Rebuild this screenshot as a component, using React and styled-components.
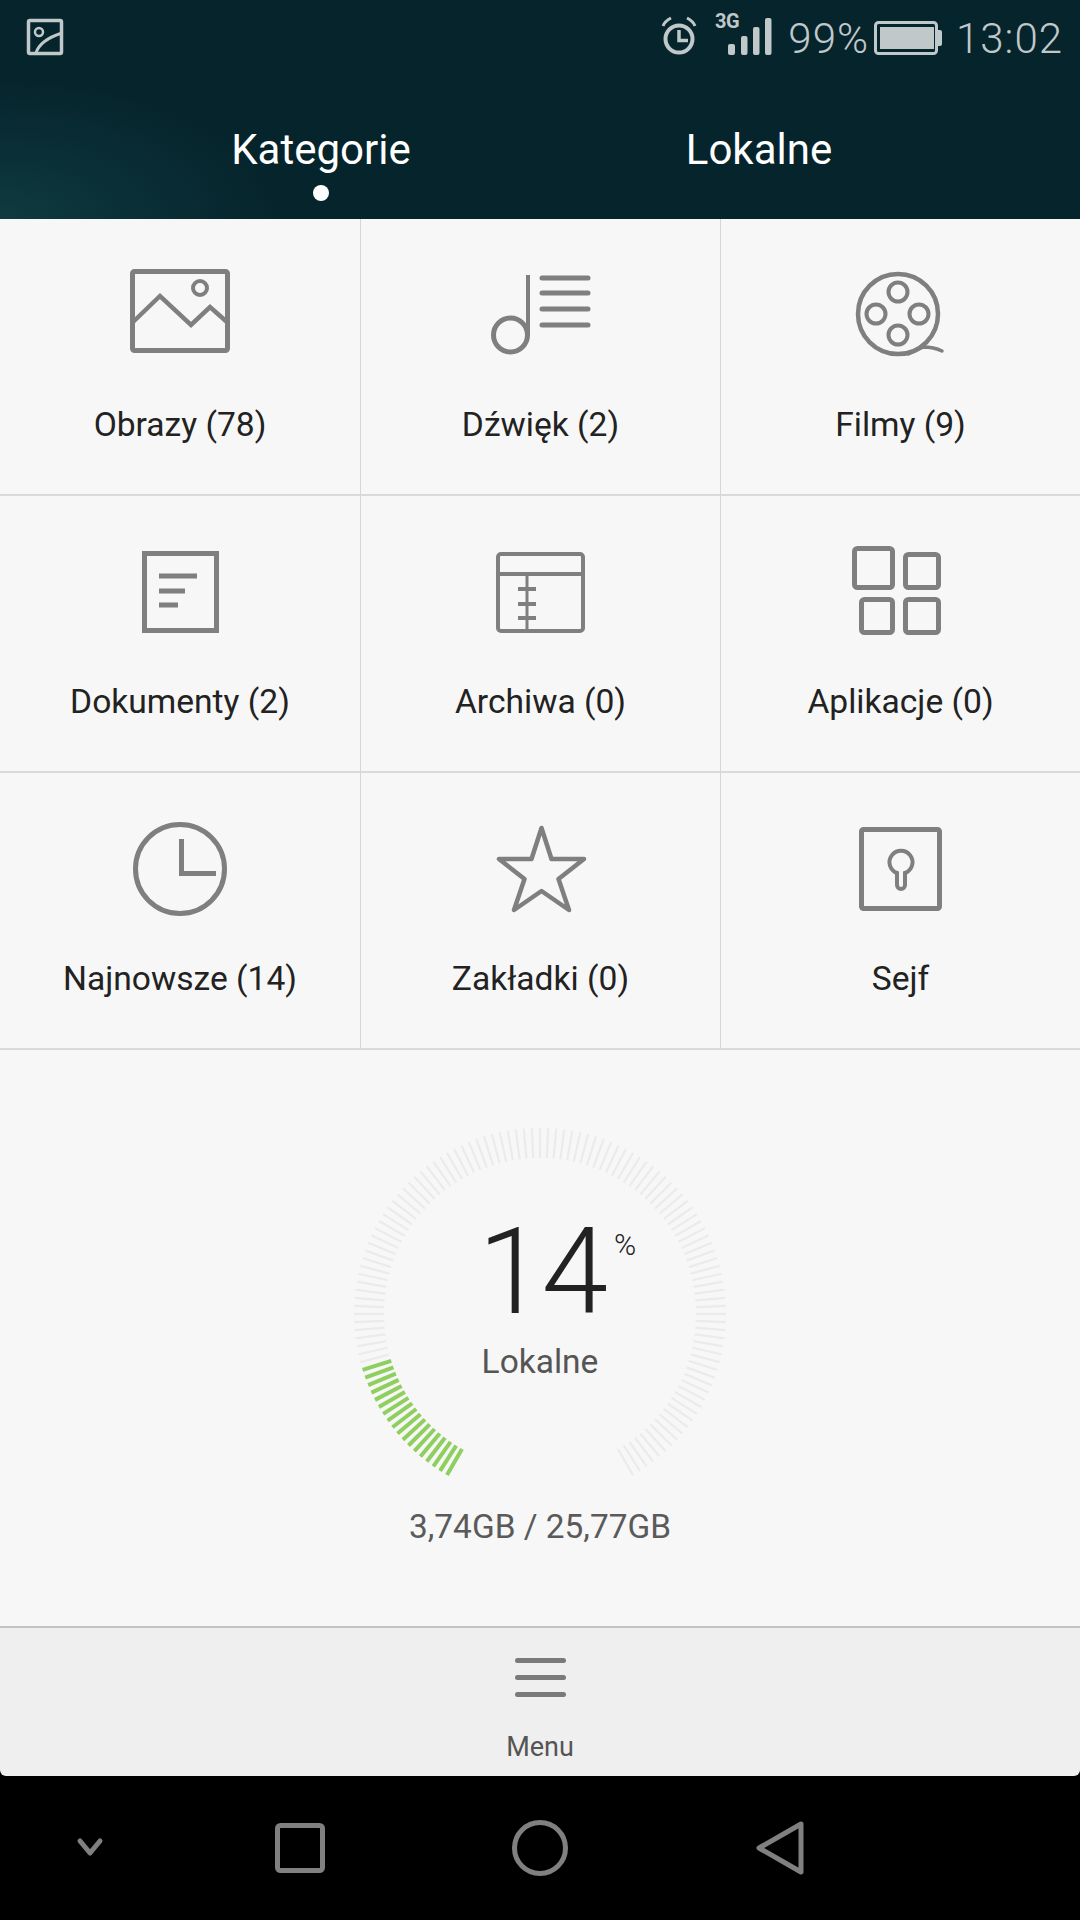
import React from 'react';
import styled, { createGlobalStyle } from 'styled-components';

const Global = createGlobalStyle`
html, body {
  margin: 0;
  padding: 0;
  background: #000;
}
* { box-sizing: border-box; }
`;

const Screen = styled.div`
width: 1080px;
height: 1920px;
display: flex;
flex-direction: column;
overflow: hidden;
background: #000;
font-family: Roboto, "Liberation Sans", sans-serif;
`;

const Header = styled.header`
height: 219px;
flex: none;
background:
  radial-gradient(ellipse 280px 140px at 0% 100%, #0e3a40 0%, rgba(14, 58, 64, 0) 100%),
  #06242c;
`;

const StatusBar = styled.div`
height: 70px;
display: flex;
justify-content: space-between;
align-items: flex-start;
padding: 14px 17px 0 26px;
color: #c0c8ca;
`;

const StatusGroup = styled.div`
display: flex;
align-items: flex-start;
`;

const StatusText = styled.span`
font-size: 42px;
font-weight: 300;
line-height: 50px;
letter-spacing: 1px;
margin-left: ${p => p.$left || 0}px;
`;

const Tabs = styled.nav`
display: flex;
padding: 0 102px;
`;

const Tab = styled.div`
flex: 1;
display: flex;
flex-direction: column;
align-items: center;
padding-top: 55px;
color: #fff;
font-size: 42px;
line-height: 50px;
`;

const Dot = styled.span`
width: 16px;
height: 16px;
margin-top: 10px;
border-radius: 50%;
background: #fff;
`;

const Grid = styled.section`
flex: none;
display: grid;
grid-template-columns: repeat(3, 1fr);
grid-auto-rows: 277px;
background: #f7f7f7;
`;

const Cell = styled.div`
display: flex;
flex-direction: column;
align-items: center;
padding-top: 40px;
border-bottom: 2px solid #dadada;
border-left: ${p => (p.$first ? 'none' : '1px solid #d6d6d6')};
`;

const CellIcon = styled.svg`
width: 120px;
height: 100px;
flex: none;
overflow: visible;
margin-left: ${p => (p.$first ? 0 : -2)}px;
fill: none;
stroke: #7f7f7f;
stroke-width: 5;
`;

const CellLabel = styled.div`
margin-top: 46px;
font-size: 33.6px;
line-height: 40px;
color: #222;
`;

const Storage = styled.section`
height: 576px;
flex: none;
display: flex;
flex-direction: column;
align-items: center;
padding-top: 74px;
background: #f7f7f7;
`;

const Gauge = styled.div`
position: relative;
width: 380px;
height: 380px;
`;

const GaugeInfo = styled.div`
position: absolute;
inset: 0;
display: flex;
flex-direction: column;
align-items: center;
padding-top: 78px;
`;

const Percent = styled.div`
position: relative;
margin-left: 3px;
font-size: 120px;
font-weight: 300;
line-height: 140px;
letter-spacing: -3px;
color: #222;
`;

const PercentSign = styled.span`
position: absolute;
top: 25px;
left: 100%;
margin-left: 9px;
font-size: 30px;
font-weight: 300;
line-height: 36px;
letter-spacing: 0;
color: #222;
`;

const GaugeLabel = styled.div`
font-size: 33.5px;
line-height: 40px;
color: #555;
`;

const Usage = styled.div`
margin-top: 3px;
font-size: 33.4px;
line-height: 40px;
color: #5a5a5a;
`;

const MenuBar = styled.footer`
height: 150px;
flex: none;
display: flex;
flex-direction: column;
align-items: center;
padding-top: 30px;
background: #efefef;
border-top: 2px solid #c4c4c4;
border-radius: 0 0 6px 6px;
`;

const MenuLines = styled.div`
display: flex;
flex-direction: column;
gap: 12px;
`;

const MenuLine = styled.span`
width: 51px;
height: 5px;
border-radius: 3px;
background: #7a7a7a;
`;

const MenuLabel = styled.div`
margin-top: 34px;
font-size: 27px;
line-height: 32px;
color: #555;
`;

const NavBar = styled.nav`
flex: 1;
display: grid;
grid-template-columns: 180px 240px 240px 240px 180px;
align-items: center;
justify-items: center;
background: #000;
`;

const NavIcon = styled.svg`
width: 60px;
height: 60px;
fill: none;
stroke: #808080;
stroke-width: 5;
stroke-linejoin: round;
stroke-linecap: round;
`;

const items = [
  {
    label: 'Obrazy (78)',
    icon: (
      <>
        <rect x="12.5" y="12.5" width="95" height="79" rx="2" />
        <circle cx="80" cy="29" r="7" strokeWidth="4" />
        <path d="M13 63 L40 37 L71 66 L90 48 L107 63" strokeWidth="4.5" />
      </>
    ),
  },
  {
    label: 'Dźwięk (2)',
    icon: (
      <>
        <path d="M62 19 H108 M62 34 H108 M62 50 H108 M62 66 H108" strokeLinecap="round" strokeWidth="5" />
        <path d="M48 16 V76" strokeWidth="4" />
        <circle cx="30.5" cy="76" r="17" strokeWidth="5" />
      </>
    ),
  },
  {
    label: 'Filmy (9)',
    icon: (
      <>
        <circle cx="58" cy="55" r="40" strokeWidth="4.5" />
        <circle cx="58" cy="33" r="9.5" strokeWidth="4" />
        <circle cx="36" cy="55" r="9.5" strokeWidth="4" />
        <circle cx="79" cy="55" r="9.5" strokeWidth="4" />
        <circle cx="58" cy="76" r="9.5" strokeWidth="4" />
        <path d="M68 95 Q76 92 83 88 Q94 88 102 92" strokeWidth="3.5" strokeLinecap="round" />
      </>
    ),
  },
  {
    label: 'Dokumenty (2)',
    icon: (
      <>
        <rect x="24.5" y="17.5" width="72" height="77" />
        <path d="M39 40 H77 M39 55 H65 M39 69 H58" />
      </>
    ),
  },
  {
    label: 'Archiwa (0)',
    icon: (
      <>
        <rect x="18" y="18" width="85" height="77" rx="3" strokeWidth="4" />
        <path d="M18 38 H103" strokeWidth="4" />
        <path d="M47 38 V95" strokeWidth="3" />
        <path d="M38 53 H56 M38 68 H56 M38 82 H56" strokeWidth="4" />
      </>
    ),
  },
  {
    label: 'Aplikacje (0)',
    icon: (
      <>
        <rect x="14.5" y="12.5" width="38" height="39" rx="3" />
        <rect x="65.5" y="18.5" width="33" height="33" rx="3" />
        <rect x="21.5" y="63.5" width="31" height="33" rx="3" />
        <rect x="65.5" y="63.5" width="33" height="33" rx="3" />
      </>
    ),
  },
  {
    label: 'Najnowsze (14)',
    icon: (
      <>
        <circle cx="60" cy="56" r="44.5" />
        <path d="M61.5 26 V60.5 H96" />
      </>
    ),
  },
  {
    label: 'Zakładki (0)',
    icon: (
      <path
        d="M61.5 15 L71.5 46 L104 46 L78.5 66 L89 97 L61.5 78 L34 97 L44.5 66 L19 46 L51.5 46 Z"
        strokeWidth="4.5"
        strokeLinejoin="round"
      />
    ),
  },
  {
    label: 'Sejf',
    icon: (
      <>
        <rect x="21.5" y="16.5" width="78" height="79" rx="2" />
        <path
          d="M57 60 A11.5 11.5 0 1 1 65 60 V72 A4 4 0 0 1 57 72 Z"
          strokeWidth="4"
        />
      </>
    ),
  },
];

const ticks = Array.from({ length: 121 }, (_, i) => i);

function StorageRing() {
  return (
    <svg width="380" height="380" viewBox="0 0 380 380">
      {ticks.map(i => {
        const on = i <= 17;
        // starts bottom-left, runs clockwise over the top
        const angle = 30 + i * 2.5;
        return (
          <line
            key={i}
            x1="190"
            y1="34"
            x2="190"
            y2="4"
            stroke={on ? '#8fcf5f' : '#ebebeb'}
            strokeWidth={on ? 4 : 2.2}
            transform={`rotate(${180 + angle} 190 190)`}
          />
        );
      })}
    </svg>
  );
}

function SmallPicture() {
  return (
    <svg width="38" height="38" viewBox="0 0 38 38" fill="none" stroke="#c0c8ca">
      <rect x="2.5" y="2.5" width="33" height="33" rx="1.5" strokeWidth="3.5" />
      <circle cx="13" cy="14" r="4" strokeWidth="2.5" />
      <path d="M10 35 Q14 22 36 15" strokeWidth="3" />
    </svg>
  );
}

function Alarm() {
  return (
    <svg width="36" height="42" viewBox="0 0 36 42" fill="none" stroke="#c0c8ca" style={{ marginTop: 1 }}>
      <circle cx="18" cy="24" r="13.5" strokeWidth="4" />
      <path d="M18 15 V25.5 H27" strokeWidth="3.5" />
      <path d="M2 11 Q4 6 10 3 M34 11 Q32 6 26 3" strokeWidth="3" />
    </svg>
  );
}

function Signal() {
  return (
    <svg width="60" height="50" viewBox="0 -6 60 50" fill="#c0c8ca" style={{ marginLeft: 15, marginTop: -8 }}>
      <text x="3" y="16" fontFamily="Roboto, sans-serif" fontWeight="700" fontSize="20" letterSpacing="-0.5">3G</text>
      <rect x="16" y="32" width="7" height="11" rx="2" />
      <rect x="29" y="24" width="6.5" height="19" rx="2" />
      <rect x="41" y="15" width="6.5" height="28" rx="2" />
      <rect x="53" y="6" width="6.5" height="37" rx="2" />
    </svg>
  );
}

function Battery() {
  return (
    <svg width="68" height="34" viewBox="0 0 68 34" style={{ marginLeft: 5, marginTop: 7 }}>
      <rect x="1.5" y="1.5" width="61" height="31" rx="3" fill="none" stroke="#c0c8ca" strokeWidth="3" />
      <rect x="6" y="6" width="54" height="22" fill="#c0c8ca" />
      <path d="M64 9 H66 Q68 9 68 11 V23 Q68 25 66 25 H64 Z" fill="#c0c8ca" />
    </svg>
  );
}

export default function App() {
  return (
    <Screen>
      <Global />
      <Header>
        <StatusBar>
          <div style={{ marginTop: 4 }}>
            <SmallPicture />
          </div>
          <StatusGroup>
            <Alarm />
            <Signal />
            <StatusText $left={16}>99%</StatusText>
            <Battery />
            <StatusText $left={14}>13:02</StatusText>
          </StatusGroup>
        </StatusBar>
        <Tabs>
          <Tab>
            Kategorie
            <Dot />
          </Tab>
          <Tab>Lokalne</Tab>
        </Tabs>
      </Header>
      <Grid>
        {items.map((item, i) => (
          <Cell key={item.label} $first={i % 3 === 0}>
            <CellIcon viewBox="0 0 120 100" $first={i % 3 === 0}>{item.icon}</CellIcon>
            <CellLabel>{item.label}</CellLabel>
          </Cell>
        ))}
      </Grid>
      <Storage>
        <Gauge>
          <StorageRing />
          <GaugeInfo>
            <Percent>
              14
              <PercentSign>%</PercentSign>
            </Percent>
            <GaugeLabel>Lokalne</GaugeLabel>
          </GaugeInfo>
        </Gauge>
        <Usage>3,74GB / 25,77GB</Usage>
      </Storage>
      <MenuBar>
        <MenuLines>
          <MenuLine />
          <MenuLine />
          <MenuLine />
        </MenuLines>
        <MenuLabel>Menu</MenuLabel>
      </MenuBar>
      <NavBar>
        <NavIcon viewBox="0 0 60 60" strokeWidth="4">
          <path d="M20 23 L30 35 L40 23" />
        </NavIcon>
        <NavIcon viewBox="0 0 60 60">
          <rect x="7.5" y="7.5" width="45" height="45" rx="3" />
        </NavIcon>
        <NavIcon viewBox="0 0 60 60">
          <circle cx="30" cy="30" r="25.5" />
        </NavIcon>
        <NavIcon viewBox="0 0 60 60">
          <path d="M51 6 L9 30 L51 54 Z" />
        </NavIcon>
        <span />
      </NavBar>
    </Screen>
  );
}
